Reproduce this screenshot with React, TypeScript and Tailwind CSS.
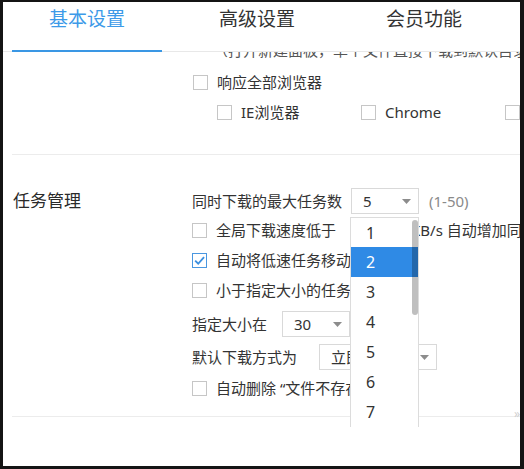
import React from "react";

const items = ["1", "2", "3", "4", "5", "6", "7"];

function Box({ checked = false }: { checked?: boolean }) {
  return (
    <span
      className={`flex h-[15px] w-[15px] shrink-0 items-center justify-center border bg-white ${
        checked ? "border-[#4a97e0]" : "border-[#c6c6c6]"
      }`}
    >
      {checked && (
        <svg width="13" height="13" viewBox="0 0 12 12">
          <path d="M2 6.2 L4.8 9 L10.2 2.8" fill="none" stroke="#3b8fdf" strokeWidth="1.7" />
        </svg>
      )}
    </span>
  );
}

function Caret() {
  return (
    <svg width="9" height="5" viewBox="0 0 9 5" className="shrink-0">
      <path d="M0 0 H9 L4.5 5 Z" fill="#8c8c8c" />
    </svg>
  );
}

function Select({ value, className, children }: { value: string; className: string; children?: React.ReactNode }) {
  return (
    <div
      className={`relative flex h-[26px] shrink-0 items-center justify-between border border-[#d9d9d9] bg-white pl-[11px] pr-[7px] ${className}`}
    >
      <span className="text-[15px]">{value}</span>
      <Caret />
      {children}
    </div>
  );
}

function Dropdown() {
  return (
    <div className="absolute left-[-2px] top-[28px] z-10 h-[210px] w-[69px] border-x border-t border-[#dcdcdc] bg-white">
      {items.map((n, i) => (
        <div
          key={n}
          className={`flex items-center pl-[15px] text-[16px] ${i === 0 ? "h-[29px]" : "h-[30px]"} ${
            n === "2" ? "bg-[#2f8ae5] text-white" : "text-[#333]"
          }`}
        >
          {n}
        </div>
      ))}
      <div className="absolute right-0 top-[2px] h-[95px] w-[6px] rounded-[3px] bg-black/25" />
    </div>
  );
}

export default function App() {
  return (
    <div className="h-[469px] w-[524px] overflow-hidden border-b-[3px] border-l-[3px] border-r-[4px] border-t-[2px] border-[#141414] bg-white font-['Noto_Sans','Noto_Sans_CJK_SC',sans-serif] text-[#333]">
      <div className="flex h-full flex-col">
        {/* Tabs */}
        <nav className="relative z-20 flex h-[50px] shrink-0 border-b border-[#e8e8e8] bg-white pl-[9px] text-[19px] leading-[28px]">
          <div className="h-[50px] w-[150px] border-b-2 border-[#3a97e4] pt-[3px] text-center text-[#3d9ae8]">基本设置</div>
          <div className="w-[190px] pt-[3px] text-center">高级设置</div>
          <div className="w-[144px] pt-[3px] text-center">会员功能</div>
        </nav>

        <div className="relative flex-1 overflow-hidden text-[15px]">
          {/* scrolled-off line */}
          <div className="h-[7px] overflow-hidden whitespace-nowrap pl-[210px]">
            <p className="-mt-[12px] leading-[20px] text-[#555]">（打开新建面板，单个文件直接下载到默认目录）</p>
          </div>

          <div className="mt-[8px] flex h-[30px] items-center gap-[9px] whitespace-nowrap pl-[190px]">
            <Box />
            <span>响应全部浏览器</span>
          </div>
          <div className="flex h-[31px] items-center whitespace-nowrap pl-[214px]">
            <div className="flex w-[144px] shrink-0 items-center gap-[9px]">
              <Box />
              <span>IE浏览器</span>
            </div>
            <div className="flex w-[144px] shrink-0 items-center gap-[9px]">
              <Box />
              <span>Chrome</span>
            </div>
            <div className="flex w-[144px] shrink-0 items-center gap-[9px]">
              <Box />
              <span>Firefox</span>
            </div>
          </div>

          <div className="ml-[9px] mt-[26px] h-px bg-[#ececec]" />

          {/* Task management */}
          <div className="flex">
            <div className="w-[189px] shrink-0 pl-[10px] pt-[32px]">
              <div className="flex h-[28px] items-center text-[17px] text-[#2a2a2a]">任务管理</div>
            </div>
            <div className="flex flex-col whitespace-nowrap pt-[32px]">
              <div className="flex h-[28px] items-center">
                <span>同时下载的最大任务数</span>
                <Select value="5" className="ml-[9px] w-[68px]">
                  <Dropdown />
                </Select>
                <span className="ml-[10px] text-[#8a8a8a]">(1-50)</span>
              </div>
              <div className="flex h-[30px] items-center">
                <Box />
                <span className="ml-[9px]">全局下载速度低于</span>
                <span className="w-[75px] shrink-0" />
                <span>KB/s 自动增加同时下载任务数</span>
              </div>
              <div className="flex h-[30px] items-center">
                <Box checked />
                <span className="ml-[9px]">自动将低速任务移动到队尾</span>
              </div>
              <div className="flex h-[30px] items-center">
                <Box />
                <span className="ml-[9px]">小于指定大小的任务优先下载</span>
              </div>
              <div className="flex h-[38px] items-center">
                <span>指定大小在</span>
                <Select value="30" className="ml-[15px] w-[68px]" />
                <span className="ml-[8px]">MB</span>
              </div>
              <div className="flex h-[28px] items-center">
                <span>默认下载方式为</span>
                <Select value="立即下载" className="ml-[22px] w-[118px]" />
              </div>
              <div className="flex h-[34px] items-center">
                <Box />
                <span className="ml-[9px]">自动删除 “文件不存在”的任务</span>
              </div>
            </div>
          </div>

          <div className="relative ml-[9px] mt-[11px] h-px bg-[#ececec]">
            <span className="absolute -top-[10px] right-0 text-[12px] leading-[16px] text-[#cfcfcf]">»</span>
          </div>
        </div>
      </div>
    </div>
  );
}
